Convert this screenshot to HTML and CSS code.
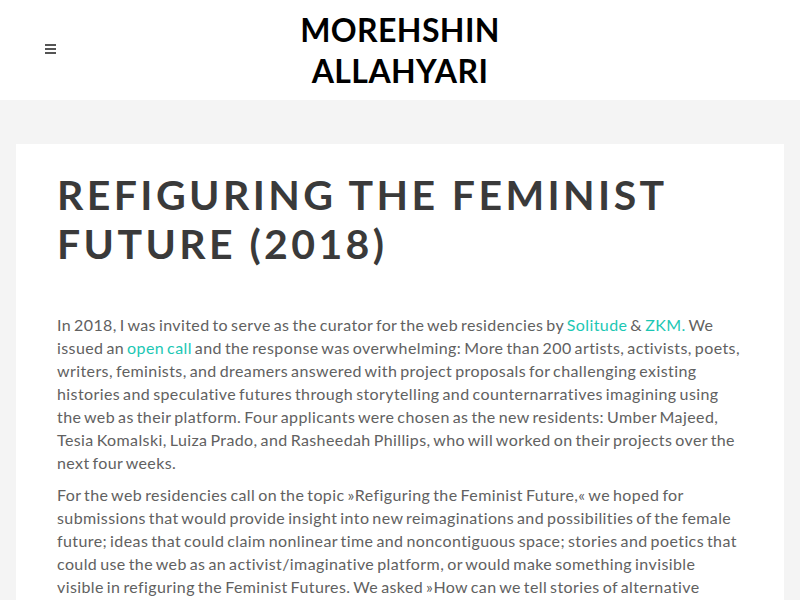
FILE: index.html
```html
<!DOCTYPE html>
<html lang="en">
<head>
<meta charset="utf-8">
<title>Refiguring the Feminist Future (2018) – Morehshin Allahyari</title>
<link rel="stylesheet" href="styles.css">
</head>
<body>
<header class="site-header">
  <button class="menu-toggle" aria-label="Menu">
    <span class="bar"></span><span class="bar"></span><span class="bar"></span>
  </button>
  <a class="logo" href="#">MOREHSHIN<br>ALLAHYARI</a>
</header>
<main class="page">
  <article class="card">
    <h1 class="title">REFIGURING THE FEMINIST FUTURE (2018)</h1>
    <div class="entry">
      <p>In 2018, I was invited to serve as the curator for the web residencies by <a href="#">Solitude</a> &amp; <a href="#">ZKM.</a> We issued an <a href="#">open call</a> and the response was overwhelming: More than 200 artists, activists, poets, writers, feminists, and dreamers answered with project proposals for challenging existing histories and speculative futures through storytelling and counternarratives imagining using the web as their platform. Four applicants were chosen as the new residents: Umber Majeed, Tesia Komalski, Luiza Prado, and Rasheedah Phillips, who will worked on their projects over the next four weeks.</p>
      <p>For the web residencies call on the topic »Refiguring the Feminist Future,« we hoped for submissions that would provide insight into new reimaginations and possibilities of the female future; ideas that could claim nonlinear time and noncontiguous space; stories and poetics that could use the web as an activist/imaginative platform, or would make something invisible visible in refiguring the Feminist Futures. We asked »How can we tell stories of alternative futures through the web?«</p>
    </div>
  </article>
</main>
</body>
</html>
```

FILE: styles.css
```css
* { box-sizing: border-box; }
html, body { margin: 0; padding: 0; }
body {
  background: #f4f4f4;
  font-family: "Lato", "Liberation Sans", sans-serif;
  color: #616161;
}
.site-header {
  position: relative;
  height: 100px;
  background: #fff;
  display: flex;
  justify-content: center;
  align-items: center;
}
.menu-toggle {
  position: absolute;
  left: 45px;
  top: 44px;
  width: 11px;
  height: 10px;
  padding: 0;
  border: 0;
  background: none;
  display: flex;
  flex-direction: column;
  justify-content: space-between;
  cursor: pointer;
}
.menu-toggle .bar {
  display: block;
  height: 2px;
  width: 11px;
  background: #555;
}
.logo {
  font-family: "Lato", "Liberation Sans", sans-serif;
  font-weight: 700;
  font-size: 32px;
  line-height: 41px;
  color: #000;
  text-decoration: none;
  text-align: center;
  letter-spacing: 0.4px;
}
.page {
  padding: 44px 16px 0;
}
.card {
  background: #fff;
  padding: 26px 41px 20px;
}
.title {
  margin: 0 0 45px;
  font-family: "Lato", "Liberation Sans", sans-serif;
  font-weight: 700;
  font-size: 41px;
  line-height: 49px;
  letter-spacing: 3.4px;
  color: #3a3a3a;
}
.entry p {
  margin: 0 0 9px;
  font-size: 16px;
  line-height: 23px;
  letter-spacing: 0.4px;
  word-spacing: -1.5px;
}
.entry a {
  color: #1cc7b4;
  text-decoration: none;
}
```
